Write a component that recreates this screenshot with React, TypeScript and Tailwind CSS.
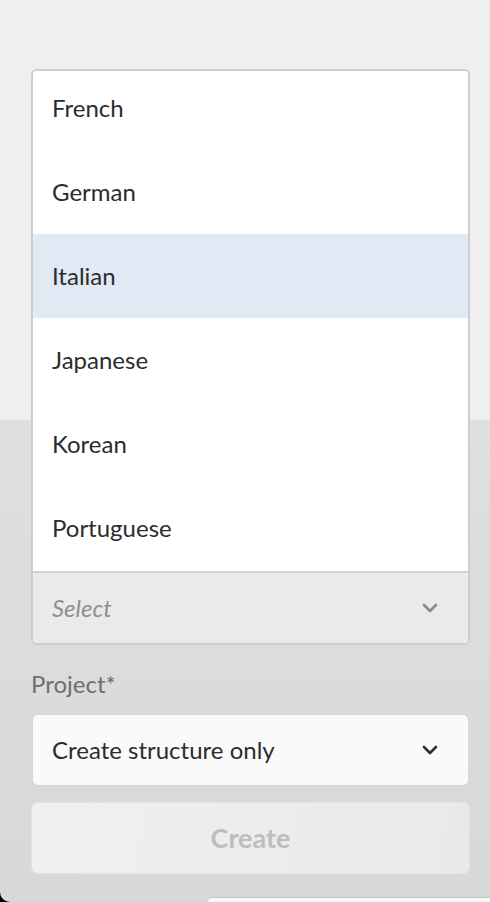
import React from "react";

const Chevron = ({ color }: { color: string }) => (
  <svg width="16" height="10" viewBox="0 0 16 10" fill="none">
    <path d="M2 2 L8 8 L14 2" stroke={color} strokeWidth="2.6" strokeLinecap="round" strokeLinejoin="round" />
  </svg>
);

const items = ["French", "German", "Italian", "Japanese", "Korean", "Portuguese"];

export default function App() {
  return (
    <div className="relative w-[490px] h-[902px] overflow-hidden bg-black" style={{ fontFamily: "Lato, 'Open Sans', sans-serif" }}>
      <div className="h-full rounded-bl-[10px] bg-[linear-gradient(180deg,#efefef_0px,#efefef_420px,#dfdfdf_420px,#d8d8d8_902px)] pl-[31px] pr-[20px] pt-[69px] flex flex-col">
        <div className="h-[576px] border-2 border-[#cdcdcd] rounded-[6px] bg-white flex flex-col overflow-hidden">
          <div className="h-[500px] overflow-hidden">
            <div className="-mt-[5px] flex flex-col">
              {items.map((it) => (
                <div
                  key={it}
                  className={`h-[84px] shrink-0 flex items-center pl-[19px] text-[24px] text-[#2c2c2c] ${it === "Italian" ? "bg-[#e1e9f5]" : "bg-white"}`}
                >
                  {it}
                </div>
              ))}
            </div>
          </div>
          <div className="h-[2px] bg-[#d2d2d2]" />
          <div className="flex-1 bg-[#eaeaea] flex items-center justify-between pl-[19px] pr-[30px]">
            <span className="italic text-[24px] text-[#8f8f8f]">Select</span>
            <Chevron color="#8a8a8a" />
          </div>
        </div>
        <div className="mt-[24px] h-[30px] leading-[30px] text-[24px] text-[#6e6e6e]">Project*</div>
        <div className="mt-[14px] h-[74px] border-2 border-[#d8d8d8] rounded-[7px] bg-[#fafafa] flex items-center justify-between pl-[19px] pr-[30px]">
          <span className="text-[24px] text-[#2c2c2c]">Create structure only</span>
          <Chevron color="#2f2f2f" />
        </div>
        <div className="mt-[15px] h-[72px] rounded-[7px] border border-[#e4e4e4] bg-[linear-gradient(100deg,#f0f0f0,#e9e9e9)] flex items-center justify-center">
          <span className="text-[27px] font-bold text-[#bdbdbd]">Create</span>
        </div>
      </div>
      <div className="absolute left-[207px] right-0 bottom-0 h-[5px] bg-[#f7f7f7] rounded-tl-[6px] border-t border-l border-[#c8c8c8]" />
    </div>
  );
}
